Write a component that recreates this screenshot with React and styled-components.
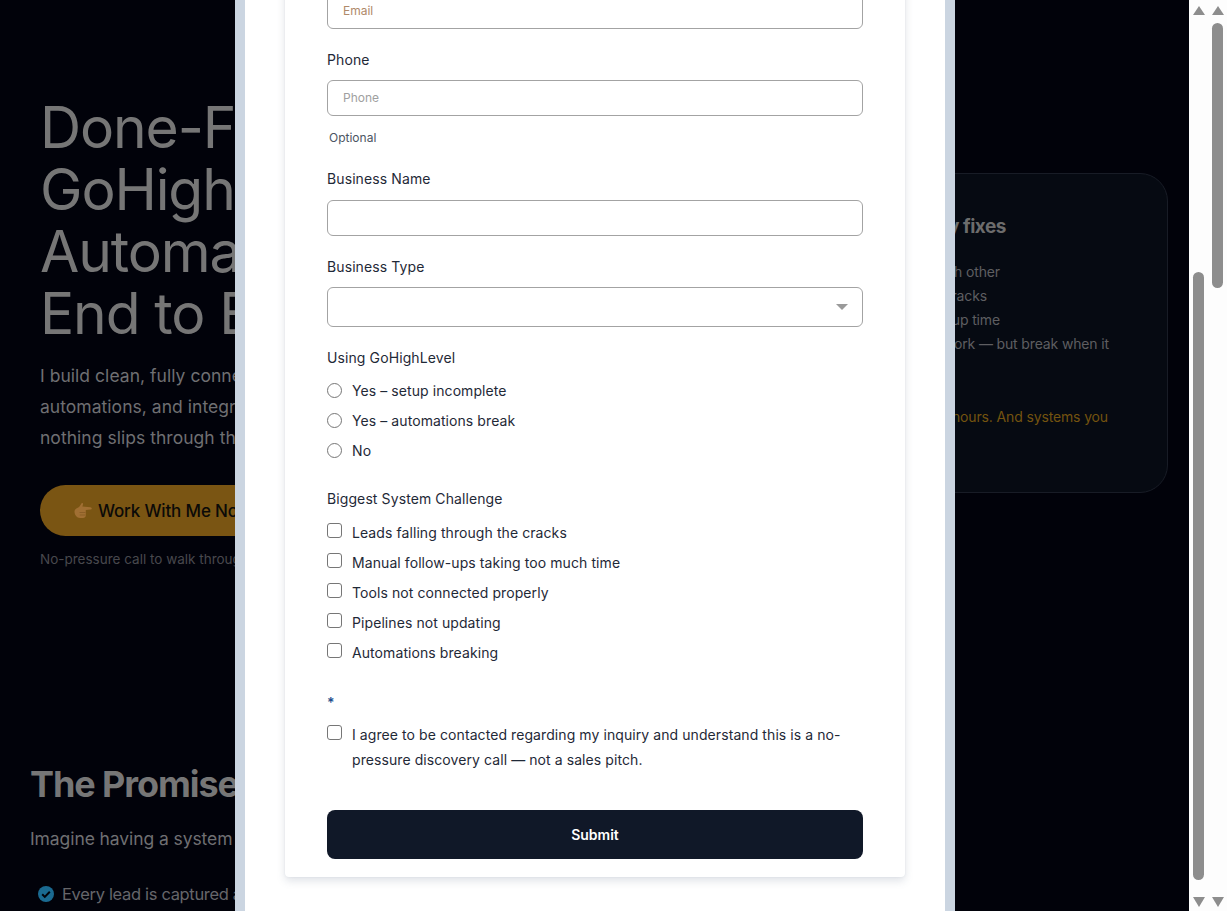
import React from "react";
import styled, { createGlobalStyle } from "styled-components";

const Global = createGlobalStyle`
  html, body { margin: 0; padding: 0; height: 911px; overflow: hidden; background: #01020a; }
  * { box-sizing: border-box; }
`;

const Page = styled.div`
  position: relative;
  display: flex;
  width: 1227px;
  height: 911px;
  overflow: hidden;
  font-family: Inter, "Liberation Sans", sans-serif;
`;

const Backdrop = styled.main`
  flex: 0 0 1189px;
  height: 911px;
  overflow: hidden;
  background: #01020a;
  color: #777;
`;

const Hero = styled.section`
  display: grid;
  grid-template-columns: 1fr 540px;
  padding: 97px 21px 0 40px;
`;

const HeroCopy = styled.div`
  display: flex;
  flex-direction: column;
  align-items: flex-start;
  white-space: nowrap;
`;

const Headline = styled.h1`
  margin: 0;
  font-size: 57px;
  line-height: 62px;
  font-weight: 400;
  letter-spacing: -0.02em;
  color: #767676;
`;

const Lead = styled.p`
  margin: 15px 0 0;
  font-size: 17.5px;
  line-height: 31px;
  font-weight: 400;
  letter-spacing: 0.002em;
  color: #6f6f72;
`;

const CallButton = styled.div`
  display: flex;
  align-items: center;
  gap: 6px;
  height: 51px;
  margin-top: 32px;
  padding: 0 34px;
  border-radius: 26px;
  background: #7a5513;
  color: #0b0a08;
  font-size: 17px;
  font-weight: 500;
  letter-spacing: -0.01em;
`;

const CallNote = styled.p`
  margin: 13px 0 0;
  font-size: 13.5px;
  line-height: 20px;
  letter-spacing: 0;
  color: #48484d;
`;

const FixCard = styled.aside`
  height: 320px;
  margin-top: 76px;
  padding: 39px 20px 0 36px;
  border: 1px solid #181c26;
  border-radius: 28px;
  background: #060a12;
  white-space: nowrap;
`;

const FixTitle = styled.h3`
  margin: 0;
  padding-right: 141px;
  font-size: 19px;
  line-height: 28px;
  font-weight: 700;
  letter-spacing: -0.025em;
  text-align: right;
  color: #6c6c6c;
`;

const FixList = styled.ul`
  margin: 19px 0 0;
  padding: 0;
  list-style: none;
`;

const FixItem = styled.li`
  padding-right: ${(p) => p.$end}px;
  font-size: 14px;
  line-height: 24px;
  letter-spacing: -0.01em;
  text-align: right;
  color: #5e5e61;
`;

const FixGold = styled.p`
  margin: 25px 0 0;
  padding-right: 39px;
  font-size: 14px;
  line-height: 24px;
  letter-spacing: -0.01em;
  text-align: right;
  color: #74530f;
`;

const Promise = styled.section`
  margin-top: 193px;
  padding-left: 30px;
  white-space: nowrap;
`;

const PromiseTitle = styled.h2`
  margin: 0;
  font-size: 36px;
  line-height: 44px;
  font-weight: 700;
  letter-spacing: -0.03em;
  color: #767676;
`;

const PromiseLead = styled.p`
  margin: 20px 0 0;
  font-size: 17.5px;
  line-height: 26px;
  letter-spacing: -0.005em;
  color: #6f6f72;
`;

const PromisePoint = styled.div`
  display: flex;
  align-items: center;
  gap: 8px;
  margin-top: 30px;
  padding-left: 8px;
  font-size: 16.5px;
  line-height: 24px;
  letter-spacing: -0.02em;
  color: #66666a;
`;

const Modal = styled.div`
  position: absolute;
  top: 0;
  left: 235px;
  display: flex;
  flex-direction: column;
  justify-content: flex-end;
  width: 720px;
  height: 911px;
  padding: 0 40px 34px;
  overflow: hidden;
  border-left: 10px solid #cbd5e1;
  border-right: 10px solid #cbd5e1;
  background: #fff;
`;

const FormCard = styled.form`
  flex: none;
  padding: 0 42px 18px;
  border-radius: 4px;
  background: #fff;
  box-shadow: 0 4px 8px rgba(100, 116, 139, 0.2), 0 0 2px rgba(100, 116, 139, 0.12);
`;

const Field = styled.div`
  margin-top: ${(p) => p.$gap || 0}px;
`;

const Label = styled.label`
  display: block;
  font-size: 14px;
  line-height: 20px;
  font-weight: 400;
  letter-spacing: 0.1px;
  color: #1f2937;
`;

const TextInput = styled.input`
  display: block;
  width: 100%;
  height: 36px;
  margin-top: ${(p) => p.$top || 10}px;
  padding: 0 15px 2px;
  border: 1px solid #a3a3a3;
  border-radius: 6px;
  background: #fff;
  font: 400 12px Inter, sans-serif;
  outline: none;
  &::placeholder { color: ${(p) => p.$hint || "#a0a0a0"}; opacity: 1; }
`;

const Hint = styled.div`
  margin-top: 12px;
  padding-left: 2px;
  font-size: 12px;
  line-height: 20px;
  color: #4b5563;
`;

const SelectBox = styled.div`
  display: flex;
  align-items: center;
  justify-content: flex-end;
  height: 40px;
  margin-top: 10px;
  padding-right: 14px;
  border: 1px solid #a3a3a3;
  border-radius: 6px;
`;

const Caret = styled.span`
  width: 0;
  height: 0;
  border-left: 6px solid transparent;
  border-right: 6px solid transparent;
  border-top: 6px solid #9a9a9a;
`;

const Options = styled.div`
  display: flex;
  flex-direction: column;
  margin-top: ${(p) => p.$gap}px;
`;

const Option = styled.label`
  display: flex;
  align-items: center;
  gap: 10px;
  height: 30px;
  font-size: 14px;
  font-weight: 400;
  letter-spacing: 0.08px;
  color: #1f2937;
`;

const Radio = styled.input.attrs({ type: "radio" })`
  appearance: none;
  flex: none;
  width: 15px;
  height: 15px;
  margin: 0;
  border: 1px solid #767676;
  border-radius: 50%;
  background: #fff;
`;

const Check = styled.input.attrs({ type: "checkbox" })`
  appearance: none;
  flex: none;
  width: 15px;
  height: 15px;
  margin: -4px 0 0;
  border: 1px solid #767676;
  border-radius: 3px;
  background: #fff;
`;

const Star = styled.div`
  margin-top: 26px;
  font-size: 14px;
  line-height: 20px;
  font-weight: 600;
  color: #1e4e8c;
`;

const Consent = styled.label`
  display: flex;
  align-items: flex-start;
  gap: 10px;
  margin-top: 9px;
  font-size: 14px;
  line-height: 25px;
  font-weight: 400;
  letter-spacing: 0.08px;
  color: #1f2937;
  ${Check} { margin-top: 3px; }
`;

const Submit = styled.button`
  display: block;
  width: 100%;
  height: 49px;
  margin-top: 38px;
  border: 0;
  border-radius: 8px;
  background: #101828;
  color: #fff;
  font: 600 14px Inter, sans-serif;
`;

const Scrollbars = styled.div`
  flex: 0 0 38px;
  display: flex;
  background: #fdfdfd;
`;

const Track = styled.div`
  flex: 0 0 19px;
  display: flex;
  flex-direction: column;
  align-items: center;
  height: 911px;
  padding: 6px 0 4px;
`;

const ArrowUp = styled.span`
  flex: none;
  width: 0;
  height: 0;
  border-left: 6.5px solid transparent;
  border-right: 6.5px solid transparent;
  border-bottom: 9px solid #8d8d8d;
`;

const ArrowDown = styled.span`
  flex: none;
  width: 0;
  height: 0;
  margin-top: auto;
  border-left: 6.5px solid transparent;
  border-right: 6.5px solid transparent;
  border-top: 10px solid #8d8d8d;
`;

const Thumb = styled.span`
  flex: none;
  width: 11px;
  height: ${(p) => p.$height}px;
  margin-top: ${(p) => p.$offset}px;
  border-radius: 6px;
  background: #8d8d8d;
`;

const PointingHand = () => (
  <svg width="18" height="17" viewBox="0 0 18 17" aria-hidden="true">
    <path
      d="M0.5 9.5C0.5 7.2 2.6 6.6 4.2 5.6C5.4 4.8 6.2 3.2 7.6 1.2C8.4 0.4 9.4 1.4 9 2.6L8.4 4.6L16.4 5.2C18.2 5.5 18.2 7.4 16.4 7.6L11.8 8V13.2C11.8 15 10.6 16 9 16H6C2.8 16 0.5 13 0.5 9.5Z"
      fill="#a06f33"
    />
    <path d="M5.5 10.5H11.5M5.8 13H11.2" stroke="#855a24" strokeWidth="0.8" fill="none" />
  </svg>
);

const CheckBadge = () => (
  <svg width="16" height="16" viewBox="0 0 16 16" aria-hidden="true">
    <circle cx="8" cy="8" r="8" fill="#1a6a91" />
    <path d="M4.2 8.3l2.6 2.6 5-5.2" stroke="#01020a" strokeWidth="2" fill="none" />
  </svg>
);

const challenges = [
  "Leads falling through the cracks",
  "Manual follow-ups taking too much time",
  "Tools not connected properly",
  "Pipelines not updating",
  "Automations breaking",
];

export default function App() {
  return (
    <Page>
      <Global />
      <Backdrop>
        <Hero>
          <HeroCopy>
            <Headline>
              Done-For-You
              <br />
              GoHighLevel
              <br />
              Automation
              <br />
              End to End
            </Headline>
            <Lead>
              I build clean, fully connected systems,
              <br />
              automations, and integrations so
              <br />
              nothing slips through the cracks.
            </Lead>
            <CallButton>
              <PointingHand />
              Work With Me Now
            </CallButton>
            <CallNote>No-pressure call to walk through your setup.</CallNote>
          </HeroCopy>
          <FixCard>
            <FixTitle>What this actually fixes</FixTitle>
            <FixList>
              <FixItem $end={147}>Tools not talking to each other</FixItem>
              <FixItem $end={160}>Leads slipping through the cracks</FixItem>
              <FixItem $end={147}>Too much manual follow-up time</FixItem>
              <FixItem $end={38}>Automations that seem to work — but break when it</FixItem>
              <FixItem $end={0}>&nbsp;</FixItem>
            </FixList>
            <FixGold>More booked calls. Fewer wasted hours. And systems you</FixGold>
          </FixCard>
        </Hero>
        <Promise>
          <PromiseTitle>The Promise</PromiseTitle>
          <PromiseLead>Imagine having a system that runs itself</PromiseLead>
          <PromisePoint>
            <CheckBadge />
            Every lead is captured and followed up
          </PromisePoint>
        </Promise>
      </Backdrop>
      <Scrollbars>
        <Track>
          <ArrowUp />
          <Thumb $offset={257} $height={608} />
          <ArrowDown />
        </Track>
        <Track>
          <ArrowUp />
          <Thumb $offset={8} $height={265} />
          <ArrowDown />
        </Track>
      </Scrollbars>
      <Modal>
        <FormCard>
          <Field>
            <TextInput placeholder="Email" $hint="#b08a6a" />
          </Field>
          <Field $gap={21}>
            <Label>Phone</Label>
            <TextInput placeholder="Phone" />
            <Hint>Optional</Hint>
          </Field>
          <Field $gap={21}>
            <Label>Business Name</Label>
            <TextInput $top={11} />
          </Field>
          <Field $gap={21}>
            <Label>Business Type</Label>
            <SelectBox>
              <Caret />
            </SelectBox>
          </Field>
          <Field $gap={21}>
            <Label>Using GoHighLevel</Label>
            <Options $gap={7}>
              <Option><Radio name="ghl" />Yes – setup incomplete</Option>
              <Option><Radio name="ghl" />Yes – automations break</Option>
              <Option><Radio name="ghl" />No</Option>
            </Options>
          </Field>
          <Field $gap={24}>
            <Label>Biggest System Challenge</Label>
            <Options $gap={8}>
              {challenges.map((c) => (
                <Option key={c}><Check />{c}</Option>
              ))}
            </Options>
          </Field>
          <Star>*</Star>
          <Consent>
            <Check />
            <span>
              I agree to be contacted regarding my inquiry and understand this is a no-pressure
              discovery call — not a sales pitch.
            </span>
          </Consent>
          <Submit type="button">Submit</Submit>
        </FormCard>
      </Modal>
    </Page>
  );
}
